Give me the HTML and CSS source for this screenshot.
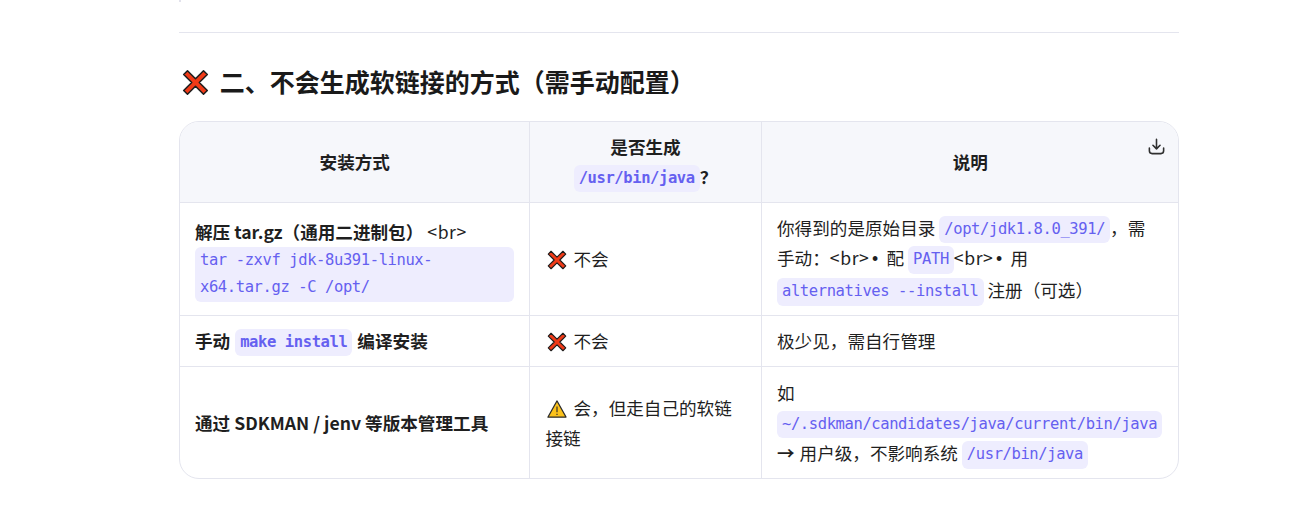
FILE: index.html
```html
<!DOCTYPE html>
<html lang="zh-CN">
<head>
<meta charset="utf-8">
<title>不会生成软链接的方式</title>
<link rel="stylesheet" href="styles.css">
</head>
<body>
<svg width="0" height="0" class="defs" aria-hidden="true">
  <symbol id="cross" viewBox="0 0 32 32">
    <path d="M6.500 2 16 11.500 25.500 2 30 6.500 20.500 16 30 25.500 25.500 30 16 20.500 6.500 30 2 25.500 11.500 16 2 6.500Z" fill="#f03a17" stroke="#1d1d1d" stroke-width="1.800" stroke-linejoin="round"/>
  </symbol>
  <symbol id="warn" viewBox="0 0 32 32">
    <path d="M16 3 30.500 29H1.500Z" fill="#fcc21b" stroke="#2b2b2b" stroke-width="1.800" stroke-linejoin="round"/>
    <path d="M16 12v9M16 23.500v2" stroke="#2b2b2b" stroke-width="1.800"/>
  </symbol>
</svg>
<main class="page">
  <div class="quote-end"></div>
  <hr class="rule">
  <h2 class="title"><svg class="emoji-lg"><use href="#cross"/></svg> 二、不会生成软链接的方式（需手动配置）</h2>
  <div class="table-wrap">
    <button class="download" aria-label="下载">
      <svg viewBox="0 0 24 24" width="19" height="19" fill="none" stroke="#2f2f2f" stroke-width="2" stroke-linecap="round" stroke-linejoin="round"><path d="M12 3v12M7.500 10.500 12 15l4.500-4.500"/><path d="M3 14v3.500A3.500 3.500 0 0 0 6.500 21h11a3.500 3.500 0 0 0 3.500-3.500V14"/></svg>
    </button>
    <table class="data">
      <colgroup><col class="c1"><col class="c2"><col class="c3"></colgroup>
      <thead>
        <tr>
          <th>安装方式</th>
          <th>是否生成 <code>/usr/bin/java</code>？</th>
          <th>说明</th>
        </tr>
      </thead>
      <tbody>
        <tr>
          <td><strong>解压 tar.gz（通用二进制包）</strong> <span class="lit">&lt;br&gt;</span> <code>tar -zxvf jdk-8u391-linux-x64.tar.gz -C /opt/</code></td>
          <td><svg class="emoji"><use href="#cross"/></svg> 不会</td>
          <td>你得到的是原始目录 <code>/opt/jdk1.8.0_391/</code>，需手动：<span class="lit">&lt;br&gt;</span><span class="bullet">•</span> 配 <code>PATH</code><span class="lit">&lt;br&gt;</span><span class="bullet">•</span> 用 <code>alternatives --install</code> 注册（可选）</td>
        </tr>
        <tr>
          <td><strong>手动 <code>make install</code> 编译安装</strong></td>
          <td><svg class="emoji"><use href="#cross"/></svg> 不会</td>
          <td>极少见，需自行管理</td>
        </tr>
        <tr>
          <td><strong>通过 SDKMAN / jenv 等版本管理工具</strong></td>
          <td><svg class="emoji"><use href="#warn"/></svg> 会，但走自己的软链接链</td>
          <td>如 <code>~/.sdkman/candidates/java/current/bin/java</code> <span class="arrow">→</span> 用户级，不影响系统 <code>/usr/bin/java</code></td>
        </tr>
      </tbody>
    </table>
  </div>
</main>
</body>
</html>
```
FILE: styles.css
```css
* { box-sizing: border-box; }
html, body { margin: 0; background: #fff; }
body {
  font-family: "Noto Sans CJK SC", "Noto Sans", sans-serif;
  font-size: 17.6px;
  line-height: 1.7;
  color: #1f1f1f;
  height: 506px;
  overflow: hidden;
}
.defs { position: absolute; }
.page { width: 1000px; margin-left: 179px; }
.quote-end { width: 2px; height: 2px; background: #e2e2ec; }
.rule { border: 0; border-top: 1px solid #e4e5ee; margin: 30px 0 0; }
.title {
  margin: 25px 0 0;
  font-size: 25px;
  line-height: 46px;
  font-weight: 700;
  color: #1a1a1a;
}
.emoji-lg { width: 27px; height: 27px; vertical-align: -4px; margin-left: 3px; margin-right: 5px; }
.emoji { width: 20px; height: 20px; vertical-align: -4px; margin-left: 1px; margin-right: 3px; }
.bullet { font-family: "Liberation Sans", sans-serif; padding: 0 4.500px 0 2.500px; }
.lit { letter-spacing: 0.600px; }
.arrow { font-weight: 700; margin-right: 1px; }
.table-wrap {
  position: relative;
  margin-top: 17px;
  border: 1px solid #e4e5ee;
  border-radius: 20px;
  overflow: hidden;
}
.download {
  position: absolute;
  top: 15px;
  right: 12px;
  padding: 0;
  border: 0;
  background: none;
  line-height: 0;
}
.data { width: 100%; border-collapse: collapse; table-layout: fixed; }
.c1 { width: 349px; }
.c2 { width: 232px; }
.data th {
  padding: 10px 15px 10px 16px;
  border: 1px solid #e4e5ee;
  text-align: left;
}
.data td {
  padding: 9.500px 15px 9.500px 16px;
  border: 1px solid #e4e5ee;
  text-align: left;
}
.data td:first-child { padding-left: 15px; padding-right: 15px; }
.data td:last-child { padding-left: 15.500px; padding-right: 15.500px; }
.data tr > :first-child { border-left: 0; }
.data tr > :last-child { border-right: 0; }
.data thead th { border-top: 0; background: #f6f7fb; text-align: center; font-weight: 700; }
.data tbody tr:last-child td { border-bottom: 0; padding-top: 11px; padding-bottom: 9px; }
code {
  display: inline-block;
  padding: 0 5px;
  border-radius: 6px;
  background: #eeedfe;
  color: #6560f0;
  font-family: "DejaVu Sans Mono", monospace;
  font-size: 15.500px;
  letter-spacing: -0.400px;
  line-height: 27.500px;
  vertical-align: 1px;
}
strong code { margin: 0 1px; }
```
